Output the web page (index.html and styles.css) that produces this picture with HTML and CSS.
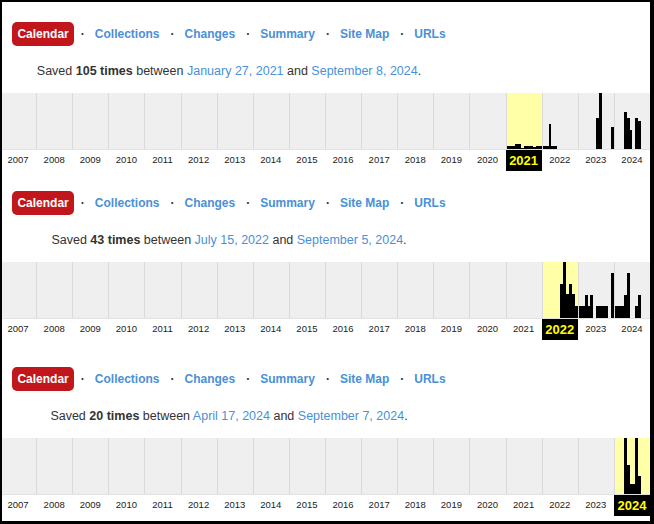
FILE: index.html
```html
<!DOCTYPE html>
<html>
  <head>
    <link rel="stylesheet" href="styles.css">
  </head>
  <body>
    <div class="frame">

      <div class="capture capture-first">
        <div class="head">
          <div class="nav">
            <a class="tab-active">Calendar</a><span class="dot dot-first">·</span>
            <a class="tab">Collections</a><span class="dot">·</span>
            <a class="tab">Changes</a><span class="dot">·</span>
            <a class="tab">Summary</a><span class="dot">·</span>
            <a class="tab">Site Map</a><span class="dot">·</span>
            <a class="tab">URLs</a>
          </div>
          <p class="saved">Saved <b>105 times</b> between <a class="date">January 27, 2021</a> and <a class="date">September 8, 2024</a>.</p>
        </div>
        <div class="js-chart" data-chart="0"></div>
      </div>

      <div class="capture capture-second">
        <div class="head">
          <div class="nav">
            <a class="tab-active">Calendar</a><span class="dot dot-first">·</span>
            <a class="tab">Collections</a><span class="dot">·</span>
            <a class="tab">Changes</a><span class="dot">·</span>
            <a class="tab">Summary</a><span class="dot">·</span>
            <a class="tab">Site Map</a><span class="dot">·</span>
            <a class="tab">URLs</a>
          </div>
          <p class="saved">Saved <b>43 times</b> between <a class="date">July 15, 2022</a> and <a class="date">September 5, 2024</a>.</p>
        </div>
        <div class="js-chart" data-chart="1"></div>
      </div>

      <div class="capture capture-third">
        <div class="head">
          <div class="nav">
            <a class="tab-active">Calendar</a><span class="dot dot-first">·</span>
            <a class="tab">Collections</a><span class="dot">·</span>
            <a class="tab">Changes</a><span class="dot">·</span>
            <a class="tab">Summary</a><span class="dot">·</span>
            <a class="tab">Site Map</a><span class="dot">·</span>
            <a class="tab">URLs</a>
          </div>
          <p class="saved">Saved <b>20 times</b> between <a class="date">April 17, 2024</a> and <a class="date">September 7, 2024</a>.</p>
        </div>
        <div class="js-chart" data-chart="2"></div>
      </div>

    </div>
    <script>
      // bar heights per month, in px of a 56px tall chart
      const charts = [
        {
          highlight: 2021,
          months: {
            2021: [3, 3, 3, 5, 5, 1, 3, 3, 3, 2, 3, 3],
            2022: [3, 3, 25, 3, 3, 0, 0, 0, 0, 0, 0, 0],
            2023: [0, 0, 0, 0, 0, 0, 31, 56, 0, 0, 0, 22],
            2024: [0, 0, 0, 37, 31, 19, 0, 31, 28, 0, 0, 0]
          }
        },
        {
          highlight: 2022,
          months: {
            2022: [0, 0, 0, 0, 0, 0, 34, 56, 24, 34, 24, 12],
            2023: [12, 12, 23, 12, 23, 0, 12, 12, 12, 12, 0, 45],
            2024: [12, 12, 12, 23, 45, 0, 0, 12, 23, 0, 0, 0]
          }
        },
        {
          highlight: 2024,
          months: {
            2024: [0, 0, 0, 56, 29, 10, 10, 56, 18, 0, 0, 0]
          }
        }
      ];

      document.querySelectorAll('.js-chart').forEach((el) => {
        const chart = charts[el.dataset.chart];
        let cols = '';
        let labels = '';
        for (let year = 2007; year <= 2024; year++) {
          const hl = year === chart.highlight;
          const months = chart.months[year] || [];
          let bars = '';
          for (let m = 0; m < 12; m++) {
            const h = months[m] || 0;
            bars += h ? `<div class="bar" style="height: ${h}px"></div>` : '<div></div>';
          }
          cols += `<div class="year-col${hl ? ' year-col-hl' : ''}">${bars}</div>`;
          labels += `<span class="year-label${hl ? ' year-label-hl' : ''}">${year}</span>`;
        }
        el.innerHTML = `<div class="chart">${cols}</div><div class="year-row">${labels}</div>`;
      });
    </script>
  </body>
</html>
```

FILE: styles.css
```css
body{
  margin: 0;
  background-color: white;
  font-family: "Liberation Sans", Arial, sans-serif;
  color: #333;
}
.frame{
  position: relative;
  width: 654px;
  height: 524px;
  overflow: hidden;
}
.frame::after{
  content: "";
  position: absolute;
  top: 0;
  left: 0;
  right: 0;
  bottom: 0;
  border-style: solid;
  border-color: black;
  border-width: 2px 4px 3px 2px;
  pointer-events: none;
}
.capture-first{
  padding-top: 22px;
}
.capture-second{
  padding-top: 21px;
}
.capture-third{
  padding-top: 28px;
}
.head{
  width: 458px;
  text-align: center;
}
.nav{
  display: flex;
  justify-content: center;
  align-items: center;
  height: 24px;
  font-size: 12px;
  font-weight: bold;
}
.tab-active{
  display: inline-block;
  background-color: #c1161c;
  color: white;
  border-radius: 5px;
  padding: 0 5px;
  height: 24px;
  line-height: 24px;
}
.tab{
  color: #4a90d6;
}
.dot{
  margin: 0 10px 0 11px;
  color: #333;
}
.dot-first{
  margin-left: 7px;
}
.saved{
  margin: 17px 0 0 0;
  font-size: 12.5px;
  line-height: 16px;
}
.saved b{
  font-weight: bold;
}
.date{
  color: #4a90d6;
}
.chart{
  display: grid;
  grid-template-columns: repeat(18, 1fr);
  width: 650px;
  height: 56px;
  margin-top: 14px;
  background-color: #efefef;
}
.year-col{
  display: grid;
  grid-template-columns: repeat(12, 1fr);
  align-items: end;
  border-left: 1px solid #dadada;
}
.year-col:first-child{
  border-left: none;
}
.year-col-hl{
  background-color: #ffffa8;
}
.bar{
  background-color: black;
}
.year-row{
  display: grid;
  grid-template-columns: repeat(18, 1fr);
  width: 650px;
  height: 20px;
  border-top: 1px solid #e2e2e2;
}
.year-label{
  text-align: center;
  font-size: 9.5px;
  line-height: 19px;
  color: #222;
}
.year-label-hl{
  background-color: black;
  color: #ffff00;
  font-size: 13px;
  font-weight: bold;
  height: 21px;
  line-height: 21px;
}
```
